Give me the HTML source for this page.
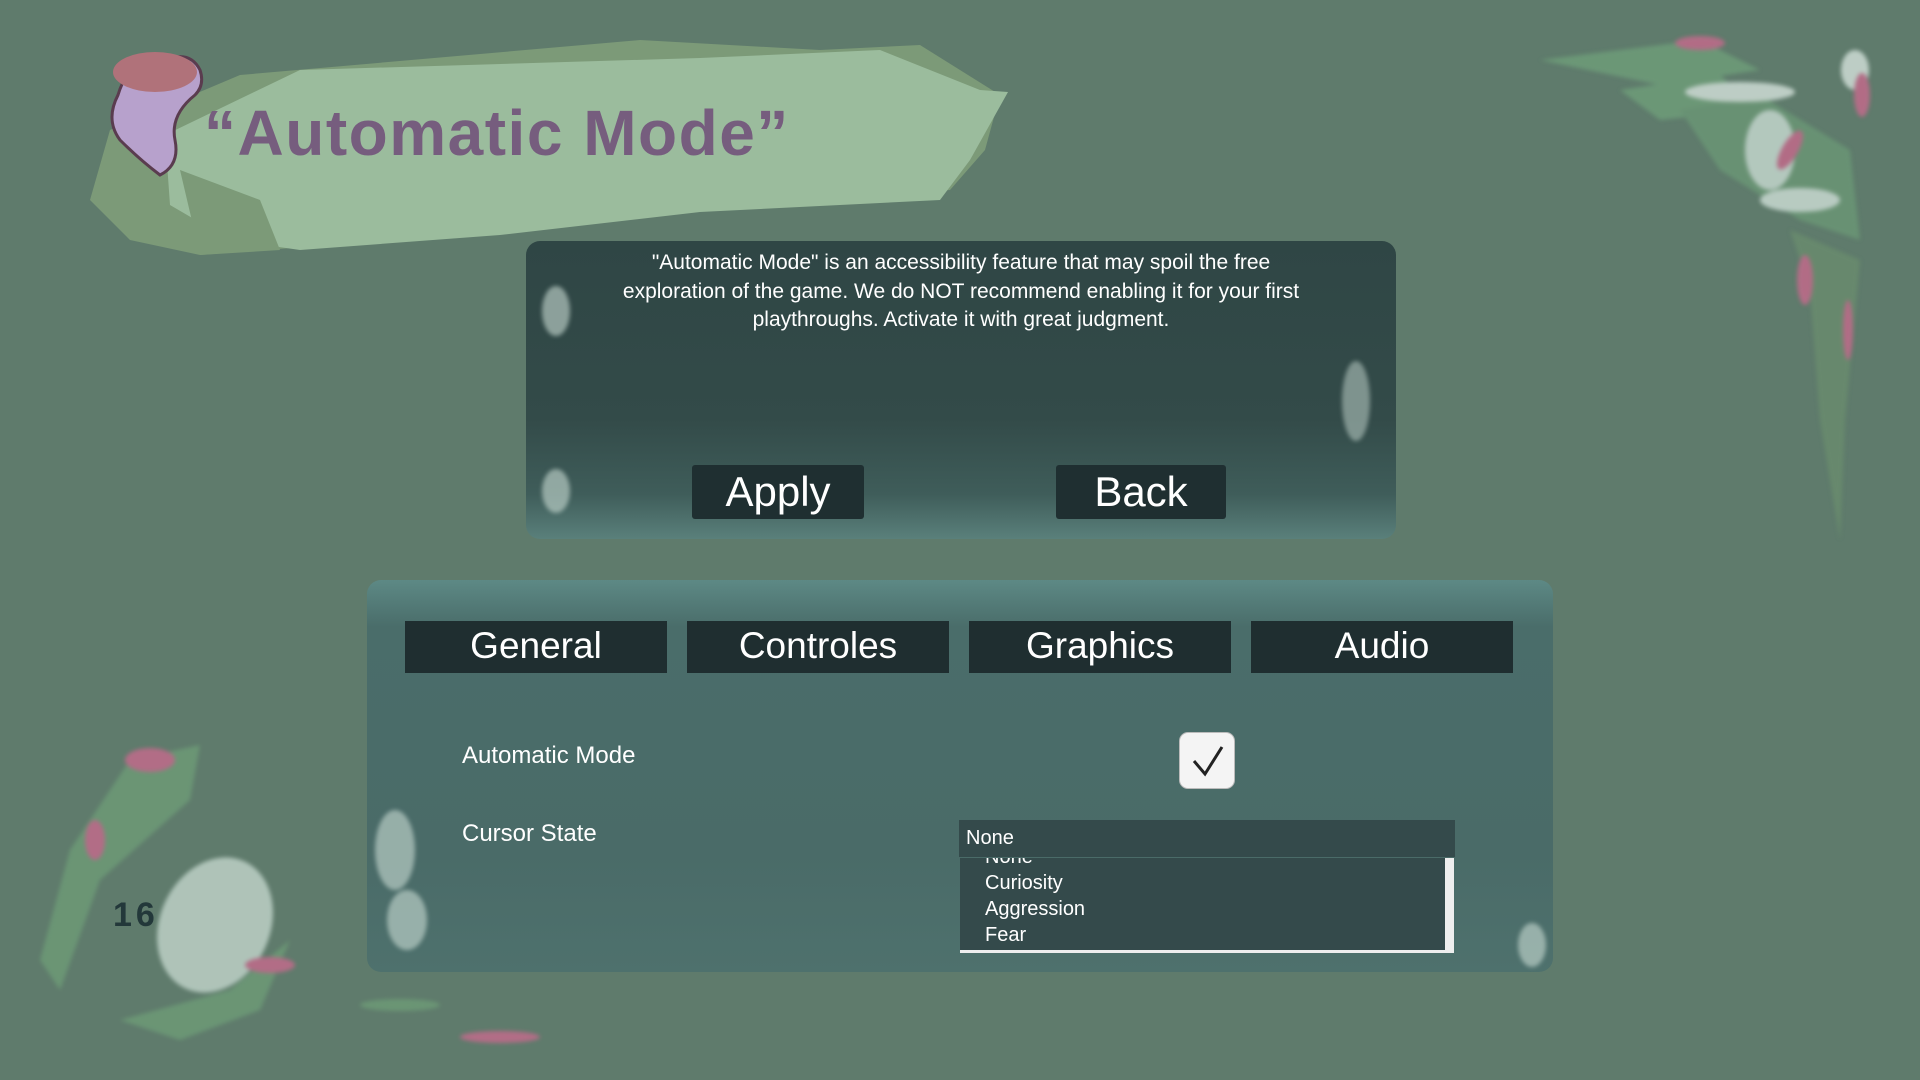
<!DOCTYPE html>
<html><head><meta charset="utf-8"><style>
*{margin:0;padding:0;box-sizing:border-box}
body{width:1920px;height:1080px;overflow:hidden;background:#5f7b6c;font-family:"Liberation Sans",sans-serif;position:relative}
.abs{position:absolute}
.title{left:204px;top:96px;font-size:64px;font-weight:bold;color:#765d7e;letter-spacing:1.5px}
.p1{left:526px;top:241px;width:870px;height:298px;border-radius:14px;background:linear-gradient(180deg,#2f4645 0%,#334b49 60%,#3f5d5a 85%,#5a807b 100%)}
.p1 .txt{position:absolute;left:0;right:0;top:8px;text-align:center;color:#fff;font-size:21px;line-height:28.5px}
.btn{position:absolute;top:224px;height:54px;background:#1f2f31;color:#fff;font-size:42px;text-align:center;line-height:54px;border-radius:3px}
.p2{left:367px;top:580px;width:1186px;height:392px;border-radius:14px;background:linear-gradient(180deg,#5d8985 0%,#4a6d6a 12%,#4a6b68 70%,#4e716d 100%)}
.tab{position:absolute;top:41px;width:262px;height:52px;background:#1f2e30;color:#fff;font-size:37px;text-align:center;line-height:50px}
.lbl{position:absolute;color:#fff;font-size:24px}
.chk{left:812px;top:152px;width:56px;height:57px;background:#f4f4f4;border-radius:9px;border:1px solid #bbb}
.dd{left:592px;top:240px;width:496px;height:37px;background:#344a4b;color:#fff;font-size:20px;line-height:36px;padding-left:7px}
.list{left:593px;top:278px;width:494px;height:95px;background:#344a4b;border-bottom:3px solid #eee;overflow:hidden}
.list .it{position:absolute;left:25px;color:#fff;font-size:20px}
.sb{position:absolute;right:0;top:0;width:9px;height:95px;background:#eee}
.soft{filter:blur(2px)}
</style></head><body>
<svg class="abs" style="left:0;top:0" width="1920" height="1080">
 <path d="M110 130 L240 75 L640 40 L820 50 L920 45 L1000 95 L985 150 L950 190 L760 205 L560 225 L330 245 L200 255 L130 240 L90 200 Z" fill="#7c9a78"/>
 <path d="M165 135 L300 70 L700 58 L880 50 L980 90 L1008 92 L970 160 L940 200 L700 212 L500 235 L300 250 L230 240 L170 205 Z" fill="#9bbc9d"/>
 <path d="M180 170 L200 255 L280 250 L260 200Z" fill="#7c9a78"/>
 <path d="M118 95 Q130 55 165 60 Q190 50 200 70 Q205 85 195 95 Q170 115 175 140 Q180 165 160 175 Q140 160 120 140 Q105 120 118 95Z" fill="#b7a1cc" stroke="#5a3c4f" stroke-width="3"/>
 <ellipse cx="155" cy="72" rx="42" ry="20" fill="#b0727a"/>
 <g class="soft" opacity=".8">
  <path d="M1540 60 L1700 40 L1760 70 L1660 85 Z" fill="#6f9f7a"/>
  <path d="M1620 90 L1720 75 L1760 110 L1660 120Z" fill="#6f9f7a"/>
  <path d="M1680 110 L1760 95 L1850 150 L1860 240 L1800 220 L1720 170Z" fill="#6b9876"/>
  <ellipse cx="1740" cy="92" rx="55" ry="10" fill="#d5e3dc"/>
  <ellipse cx="1770" cy="150" rx="25" ry="40" fill="#c9dcd3"/>
  <ellipse cx="1800" cy="200" rx="40" ry="12" fill="#cfe0d8"/>
  <ellipse cx="1855" cy="70" rx="14" ry="20" fill="#d5e3dc"/>
  <ellipse cx="1700" cy="43" rx="25" ry="7" fill="#c76a8d"/>
  <ellipse cx="1862" cy="95" rx="8" ry="22" fill="#c76a8d"/>
  <ellipse cx="1790" cy="150" rx="8" ry="22" fill="#c76a8d" transform="rotate(30 1790 150)"/>
  <path d="M1790 230 L1810 290 L1820 420 L1840 540 L1845 420 L1860 260Z" fill="#6a8d6e"/>
  <ellipse cx="1805" cy="280" rx="8" ry="25" fill="#c76a8d"/>
  <ellipse cx="1848" cy="330" rx="5" ry="30" fill="#c76a8d"/>
 </g>
 <g class="soft" opacity=".8">
  <path d="M130 760 L200 745 L190 800 L100 880 L60 990 L40 960 L70 850Z" fill="#6e9c77"/>
  <ellipse cx="150" cy="760" rx="25" ry="12" fill="#c76a8d"/>
  <ellipse cx="95" cy="840" rx="10" ry="20" fill="#c76a8d"/>
  <ellipse cx="215" cy="925" rx="55" ry="70" fill="#c3d6cc" transform="rotate(25 215 925)"/>
  <path d="M230 990 L290 940 L260 1010 L180 1040 L120 1020Z" fill="#6e9c77"/>
  <ellipse cx="270" cy="965" rx="25" ry="8" fill="#c76a8d"/>
  <ellipse cx="500" cy="1037" rx="40" ry="6" fill="#c76a8d"/>
  <ellipse cx="400" cy="1005" rx="40" ry="6" fill="#6e9c77"/>
 </g>
</svg>
<div class="abs title">“Automatic Mode”</div>
<div class="abs" style="left:113px;top:896px;font-size:34px;font-weight:bold;color:#23383a;letter-spacing:4px">16</div>

<div class="abs p1">
 <svg class="abs soft" style="left:0;top:0" width="870" height="298">
  <ellipse cx="30" cy="70" rx="14" ry="25" fill="#c9dcd3" opacity=".6"/>
  <ellipse cx="30" cy="250" rx="14" ry="22" fill="#c9dcd3" opacity=".6"/>
  <ellipse cx="830" cy="160" rx="14" ry="40" fill="#c9dcd3" opacity=".5"/>
 </svg>
 <div class="txt">"Automatic Mode" is an accessibility feature that may spoil the free<br>exploration of the game. We do NOT recommend enabling it for your first<br>playthroughs. Activate it with great judgment.</div>
 <div class="btn" style="left:166px;width:172px">Apply</div>
 <div class="btn" style="left:530px;width:170px">Back</div>
</div>

<div class="abs p2">
 <svg class="abs soft" style="left:0;top:0" width="1186" height="392">
  <ellipse cx="28" cy="270" rx="20" ry="40" fill="#c9dcd3" opacity=".6"/>
  <ellipse cx="40" cy="340" rx="20" ry="30" fill="#c9dcd3" opacity=".6"/>
  <ellipse cx="1165" cy="365" rx="14" ry="22" fill="#c9dcd3" opacity=".6"/>
 </svg>
 <div class="tab" style="left:38px">General</div>
 <div class="tab" style="left:320px">Controles</div>
 <div class="tab" style="left:602px">Graphics</div>
 <div class="tab" style="left:884px">Audio</div>
 <div class="lbl" style="left:95px;top:162px">Automatic Mode</div>
 <div class="lbl" style="left:95px;top:240px">Cursor State</div>
 <div class="abs chk"><svg width="56" height="57"><path d="M14 28 L25 41 L42 14" stroke="#222" stroke-width="3" fill="none"/></svg></div>
 <div class="abs dd">None</div>
 <div class="abs list">
  <div class="it" style="top:-12px">None</div>
  <div class="it" style="top:14px">Curiosity</div>
  <div class="it" style="top:40px">Aggression</div>
  <div class="it" style="top:66px">Fear</div>
  <div class="sb"></div>
 </div>
</div>
</body></html>
